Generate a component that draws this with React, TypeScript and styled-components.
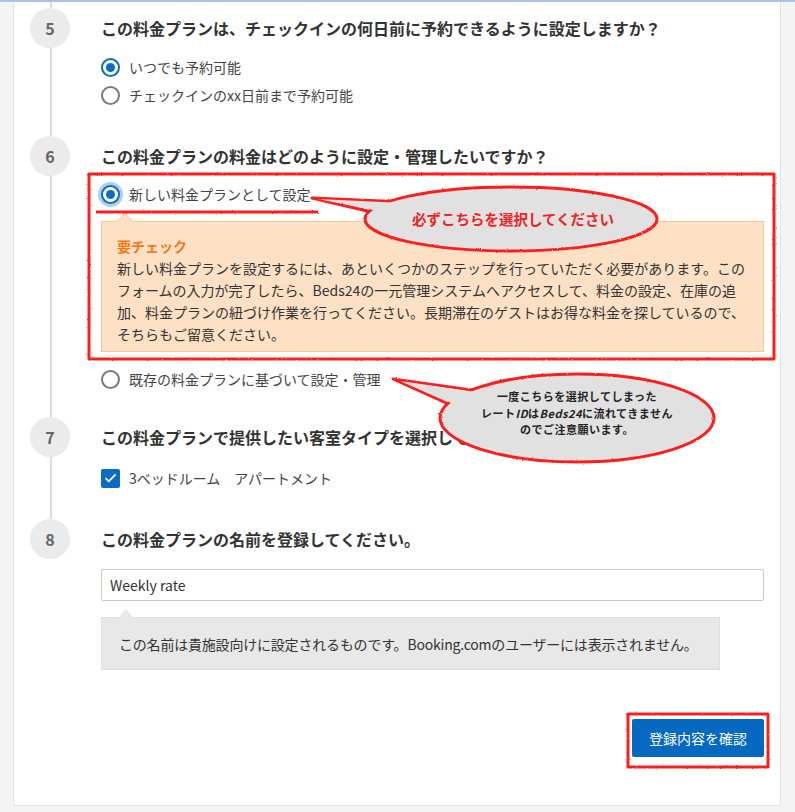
import React from 'react';
import styled, { createGlobalStyle } from 'styled-components';

const GlobalStyle = createGlobalStyle`
  * { box-sizing: border-box; }
  body {
    margin: 0;
    background: #f4f4f4;
    font-family: "Noto Sans CJK JP", "Noto Sans", sans-serif;
    color: #333;
  }
`;

const Page = styled.div`
  position: relative;
  width: 795px;
  height: 812px;
  border-top: 2px solid #adc1e2;
  overflow: hidden;
`;

const Panel = styled.main`
  margin-left: 13px;
  width: 768px;
  height: 804px;
  background: #fff;
  border: 1px solid #e3e3e3;
  border-top: none;
  padding: 0 16px 48px 0;
`;

const Step = styled.section<{ $top: number; $last?: boolean }>`
  position: relative;
  display: flex;
  padding-top: ${(p) => p.$top}px;

  &::before {
    content: '';
    position: absolute;
    left: 36px;
    top: 0;
    width: 2px;
    background: #dcdcdc;
    ${(p) => (p.$last ? `height: ${p.$top}px;` : 'bottom: 0;')}
  }
`;

const MarkerCol = styled.div`
  width: 72px;
  flex-shrink: 0;
  display: flex;
  justify-content: center;
  margin-right: 15px;
`;

const StepNumber = styled.div`
  position: relative;
  z-index: 1;
  width: 40px;
  height: 40px;
  border-radius: 50%;
  background: #ebebeb;
  color: #666;
  font-size: 16px;
  font-weight: 700;
  display: flex;
  align-items: center;
  justify-content: center;
`;

const Content = styled.div`
  flex: 1;
  display: flex;
  flex-direction: column;
`;

const Heading = styled.h2`
  margin: 0;
  height: 40px;
  line-height: 40px;
  font-size: 16px;
  font-weight: 700;
  color: #333;
  white-space: nowrap;
`;

const OptionRow = styled.label<{ $mt?: number }>`
  display: flex;
  align-items: center;
  gap: 9px;
  height: 28px;
  margin-top: ${(p) => p.$mt ?? 0}px;
  font-size: 14px;
  color: #444;
`;

const Radio = styled.span<{ $checked?: boolean; $focus?: boolean }>`
  width: 19px;
  height: 19px;
  border-radius: 50%;
  border: 2px solid ${(p) => (p.$checked ? '#0a6cc4' : '#7a7a7a')};
  background: #fff;
  display: flex;
  align-items: center;
  justify-content: center;
  box-shadow: ${(p) => (p.$focus ? '0 0 0 3px rgba(75, 150, 220, 0.45)' : 'none')};

  &::after {
    content: '';
    width: 9px;
    height: 9px;
    border-radius: 50%;
    background: ${(p) => (p.$checked ? '#0a6cc4' : 'transparent')};
  }
`;

const Checkbox = styled.span`
  width: 19px;
  height: 19px;
  border-radius: 2px;
  background: #0a6cc4;
  display: flex;
  align-items: center;
  justify-content: center;
`;

const Notice = styled.div`
  position: relative;
  margin-top: 13px;
  margin-bottom: 13px;
  padding: 13px 15px 6px;
  background: #fee0c4;
  border: 1px solid #f7c796;
  font-size: 14px;
  line-height: 22px;
  color: #333;

  &::before,
  &::after {
    content: '';
    position: absolute;
    left: 14px;
    border-style: solid;
    border-color: transparent;
  }
  &::before {
    top: -9px;
    border-width: 0 9px 9px;
    border-bottom-color: #f7c796;
  }
  &::after {
    top: -8px;
    left: 15px;
    border-width: 0 8px 8px;
    border-bottom-color: #fee0c4;
  }
`;

const NoticeTitle = styled.div`
  color: #f27a1c;
  font-weight: 700;
`;

const TextInput = styled.input`
  margin-top: 10px;
  height: 32px;
  width: 100%;
  padding: 0 8px;
  border: 1px solid #c9c9c9;
  border-radius: 2px;
  font-family: inherit;
  font-size: 14px;
  color: #333;
  outline: none;
`;

const Hint = styled.div`
  position: relative;
  margin-top: 16px;
  width: 619px;
  height: 53px;
  padding: 0 0 0 17px;
  display: flex;
  align-items: center;
  background: #e8e8e8;
  border: 1px solid #dedede;
  font-size: 14px;
  letter-spacing: -0.2px;
  white-space: nowrap;
  color: #333;

  &::before {
    content: '';
    position: absolute;
    top: -9px;
    left: 16px;
    border-style: solid;
    border-color: transparent;
    border-width: 0 8px 9px;
    border-bottom-color: #e8e8e8;
  }
`;

const Footer = styled.div`
  display: flex;
  justify-content: flex-end;
  margin-top: 49px;
`;

const SubmitButton = styled.button`
  width: 132px;
  height: 38px;
  border: none;
  border-radius: 2px;
  background: #0569c2;
  color: #fff;
  font-family: inherit;
  font-size: 14px;
`;

const Overlay = styled.svg`
  position: absolute;
  top: 0;
  left: 0;
  pointer-events: none;
`;

const BubbleNote = styled.div`
  position: absolute;
  left: 477px;
  top: 386px;
  width: 200px;
  text-align: center;
  font-size: 11px;
  line-height: 16.5px;
  font-weight: 700;
  letter-spacing: 0.5px;
  color: #222;

  i {
    font-style: italic;
  }
`;

const RED = '#ff1f1f';
const BUBBLE = '#e1e1e1';

function Annotations(): JSX.Element {
  return (
    <>
      <Overlay width={795} height={812} viewBox="0 0 795 812">
        <defs>
          <filter id="rough" x="-5%" y="-5%" width="110%" height="110%">
            <feTurbulence type="fractalNoise" baseFrequency="0.8" numOctaves="1" seed="3" />
            <feDisplacementMap in="SourceGraphic" scale="2.2" />
          </filter>
        </defs>
        <g filter="url(#rough)" stroke={RED} strokeWidth={3} strokeLinejoin="round">
          {/* frame round the new plan option */}
          <rect x={89} y={172} width={685} height={185} fill="none" />
          {/* underline */}
          <line x1={96} y1={210} x2={318} y2={210} />
          {/* bubble 1 */}
          <polygon points="312,196 405,200 380,212" fill={BUBBLE} />
          <ellipse cx={511} cy={217} rx={146} ry={32} fill={BUBBLE} />
          <polygon points="318,197 403,201 383,210" fill={BUBBLE} stroke="none" />
          {/* bubble 2 */}
          <polygon points="393,377 485,390 455,405" fill={BUBBLE} />
          <ellipse cx={577} cy={416} rx={137} ry={44} fill={BUBBLE} />
          <polygon points="400,379 483,391 456,403" fill={BUBBLE} stroke="none" />
          {/* button frame */}
          <rect x={628} y={712} width={140} height={53} fill="none" />
        </g>
        <text
          x={513}
          y={223}
          textAnchor="middle"
          fill="#ee2424"
          fontSize={14.5}
          fontWeight={700}
          fontFamily='"Noto Sans CJK JP", sans-serif'
        >
          必ずこちらを選択してください
        </text>
      </Overlay>
      <BubbleNote>
        一度こちらを選択してしまった
        <br />
        レート<i>ID</i>は<i>Beds24</i>に流れてきません
        <br />
        のでご注意願います。
      </BubbleNote>
    </>
  );
}

function App(): JSX.Element {
  return (
    <Page>
      <GlobalStyle />
      <Panel>
        <Step $top={6}>
          <MarkerCol>
            <StepNumber>5</StepNumber>
          </MarkerCol>
          <Content>
            <Heading>この料金プランは、チェックインの何日前に予約できるように設定しますか？</Heading>
            <OptionRow $mt={5}>
              <Radio $checked />
              いつでも予約可能
            </OptionRow>
            <OptionRow>
              <Radio />
              チェックインのxx日前まで予約可能
            </OptionRow>
          </Content>
        </Step>

        <Step $top={27}>
          <MarkerCol>
            <StepNumber>6</StepNumber>
          </MarkerCol>
          <Content>
            <Heading>この料金プランの料金はどのように設定・管理したいですか？</Heading>
            <OptionRow $mt={4}>
              <Radio $checked $focus />
              新しい料金プランとして設定
            </OptionRow>
            <Notice>
              <NoticeTitle>要チェック</NoticeTitle>
              新しい料金プランを設定するには、あといくつかのステップを行っていただく必要があります。この
              <br />
              フォームの入力が完了したら、Beds24の一元管理システムへアクセスして、料金の設定、在庫の追
              <br />
              加、料金プランの紐づけ作業を行ってください。長期滞在のゲストはお得な料金を探しているので、
              <br />
              そちらもご留意ください。
            </Notice>
            <OptionRow>
              <Radio />
              既存の料金プランに基づいて設定・管理
            </OptionRow>
          </Content>
        </Step>

        <Step $top={24}>
          <MarkerCol>
            <StepNumber>7</StepNumber>
          </MarkerCol>
          <Content>
            <Heading>この料金プランで提供したい客室タイプを選択してください。</Heading>
            <OptionRow $mt={7}>
              <Checkbox>
                <svg width="13" height="10" viewBox="0 0 13 10">
                  <path d="M1.5 5.2 L4.8 8.3 L11.5 1.5" fill="none" stroke="#fff" strokeWidth="1.8" />
                </svg>
              </Checkbox>
              3ベッドルーム　アパートメント
            </OptionRow>
          </Content>
        </Step>

        <Step $top={27} $last>
          <MarkerCol>
            <StepNumber>8</StepNumber>
          </MarkerCol>
          <Content>
            <Heading>この料金プランの名前を登録してください。</Heading>
            <TextInput defaultValue="Weekly rate" />
            <Hint>この名前は貴施設向けに設定されるものです。Booking.comのユーザーには表示されません。</Hint>
            <Footer>
              <SubmitButton>登録内容を確認</SubmitButton>
            </Footer>
          </Content>
        </Step>
      </Panel>
      <Annotations />
    </Page>
  );
}

export default App;
